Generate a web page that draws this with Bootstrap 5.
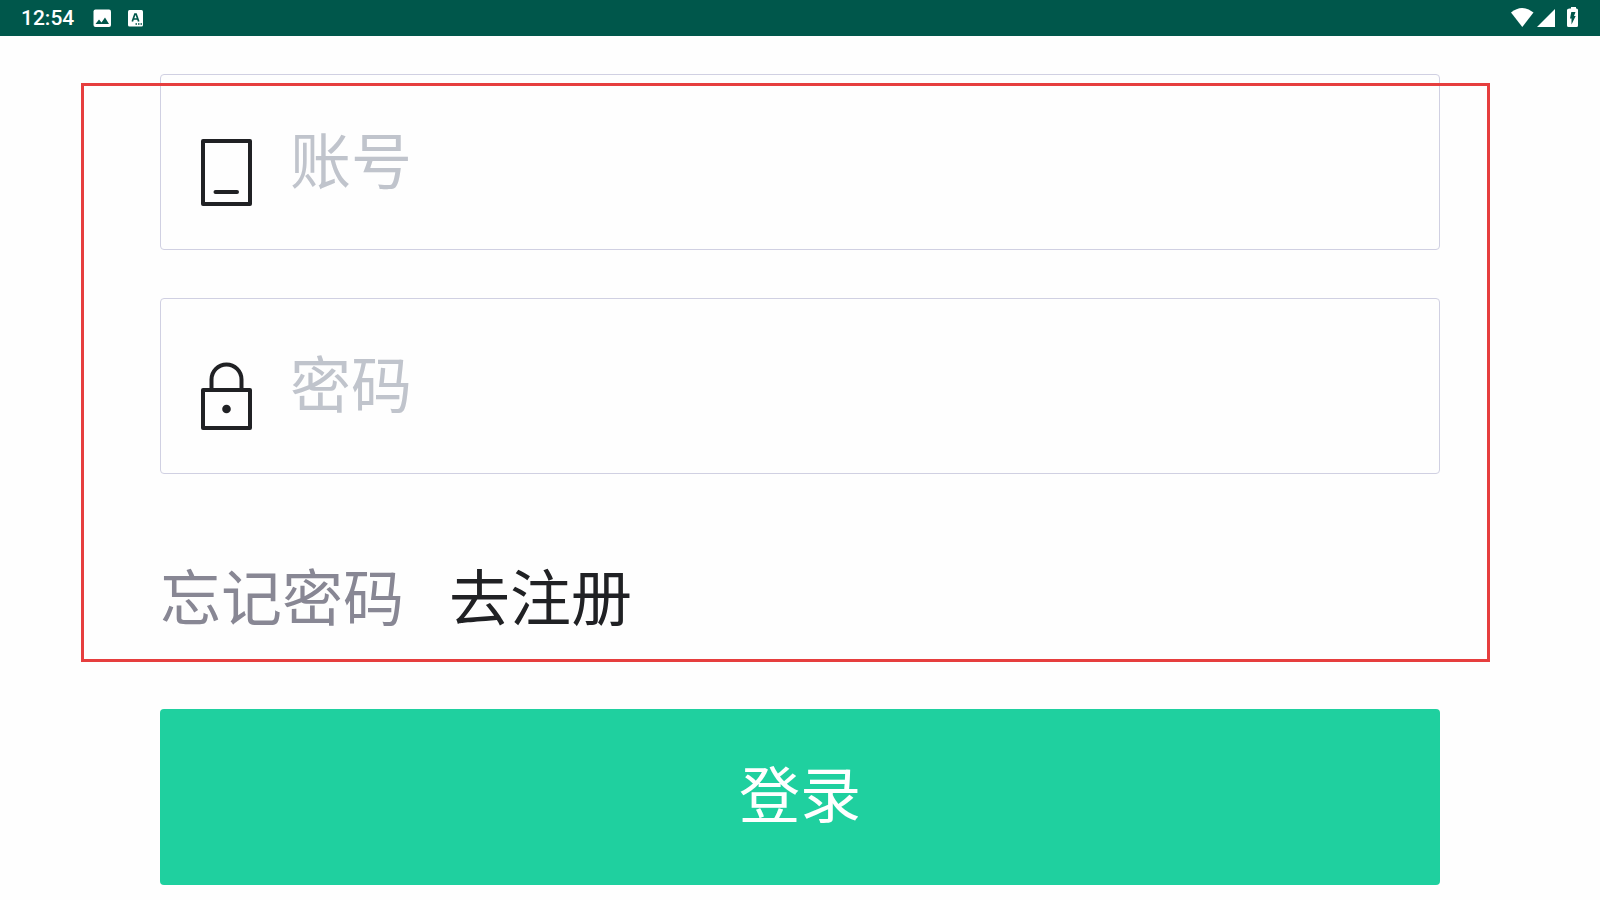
<!DOCTYPE html>
<html lang="zh-CN">
<head>
<meta charset="utf-8">
<meta name="viewport" content="width=device-width, initial-scale=1">
<title>登录</title>
<link href="https://cdn.jsdelivr.net/npm/bootstrap@5.3.0/dist/css/bootstrap.min.css" rel="stylesheet">
<style>
  body { background: #fefefe; color: #202124; font-family: Roboto, "Noto Sans CJK SC", sans-serif; }
  .status-bar { height: 36px; padding: 0 21px; background: #00574b; color: #fff; font-size: 21px; line-height: 38px; font-weight: 500; }
  .login-page { padding: 38px 10% 15px; }
  .login-field { height: 176px; padding: 43px 39px; margin-bottom: 48px; gap: 38px; border: 1px solid #d0d0e2; border-radius: 4px; }
  .login-field .form-control { height: 86px; font-size: 61px; line-height: 86px; color: #202124; border-radius: 0; }
  .login-field .form-control::placeholder { color: #c0c4cc; opacity: 1; }
  .login-links { gap: 45px; padding: 30px 0 61px; font-size: 61px; line-height: 96px; }
  .login-links a { color: #202124; text-decoration: none; }
  .login-links .forgot { color: #888794; }
  .login-submit { height: 176px; padding: 0; font-size: 61px; line-height: 88px; border: 0; border-radius: 4px;
    --bs-btn-color: #fff; --bs-btn-bg: #1fd09f; --bs-btn-hover-color: #fff; --bs-btn-hover-bg: #1bbd90; --bs-btn-active-color: #fff; --bs-btn-active-bg: #19ad84; }
  /* highlight frame drawn over the form */
  .highlight-frame { top: 9px; bottom: 223px; left: -79px; right: -50px; border: 3px solid #e63e3e; pointer-events: none; }
</style>
</head>
<body>
<header class="status-bar d-flex align-items-center justify-content-between">
  <div class="d-flex align-items-center">
    <span>12:54</span>
    <svg class="ms-3" width="22" height="20" viewBox="0 0 22 20" aria-hidden="true"><rect x="3.500" y="1.500" width="17.500" height="17.500" rx="2" fill="#fff"/><path d="M5.500 16l3.500-4.500 2.500 3 3.500-5 4 6.500z" fill="#00574b"/></svg>
    <svg class="ms-3" width="16" height="20" viewBox="0 0 16 20" aria-hidden="true"><rect x="0" y="2" width="15" height="16.500" rx="1.500" fill="#fff"/><path d="M4.300 13.500L6.900 6h1.200l2.600 7.500M5.500 11h4" fill="none" stroke="#00574b" stroke-width="1.700"/><path d="M7.500 16h1.500M10 16h1.500M12.500 16H14" stroke="#00574b" stroke-width="1.500"/></svg>
  </div>
  <svg width="68" height="22" viewBox="0 0 68 22" aria-hidden="true">
    <path d="M0 5.500Q11 -3.500 22.500 5.500L11.300 20z" fill="#fff"/>
    <path d="M44 2v18H26z" fill="#fff"/>
    <path d="M58.500 1.500h1.500V0h5v1.500H65.500q1.500 0 1.500 1.500V18.500q0 1.500-1.500 1.500H57.500q-1.500 0-1.500-1.500V3Q56 1.500 58.500 1.500z" fill="#fff"/>
    <path d="M60.300 5h4.200L63 9H64.700L60.500 17.500V11.500H59z" fill="#00574b"/>
  </svg>
</header>
<main class="login-page">
  <form class="position-relative">
    <div class="login-field d-flex align-items-end">
      <label for="account" class="d-flex" aria-label="账号"><svg width="52" height="88" viewBox="0 0 52 88" fill="none" stroke="#202124" stroke-width="4" stroke-linejoin="round" stroke-linecap="round" aria-hidden="true"><path d="M3 23H50V86H3zM15.500 74H37"/></svg></label>
      <input id="account" type="text" class="form-control border-0 p-0 bg-transparent shadow-none" placeholder="账号">
    </div>
    <div class="login-field d-flex align-items-end">
      <label for="password" class="d-flex" aria-label="密码"><svg width="52" height="88" viewBox="0 0 52 88" fill="none" stroke="#202124" stroke-width="4" stroke-linejoin="round" aria-hidden="true"><path d="M3 48H50V86H3zM11.500 47V37.500a15 15 0 0 1 30 0V47"/><circle cx="26.500" cy="67" r="4.300" fill="#202124" stroke="none"/></svg></label>
      <input id="password" type="password" class="form-control border-0 p-0 bg-transparent shadow-none" placeholder="密码">
    </div>
    <div class="login-links d-flex">
      <a class="forgot" href="#forgot">忘记密码</a>
      <a href="#register">去注册</a>
    </div>
    <button type="submit" class="login-submit btn w-100">登录</button>
    <div class="highlight-frame position-absolute"></div>
  </form>
</main>
<script src="https://cdn.jsdelivr.net/npm/bootstrap@5.3.0/dist/js/bootstrap.bundle.min.js"></script>
</body>
</html>
